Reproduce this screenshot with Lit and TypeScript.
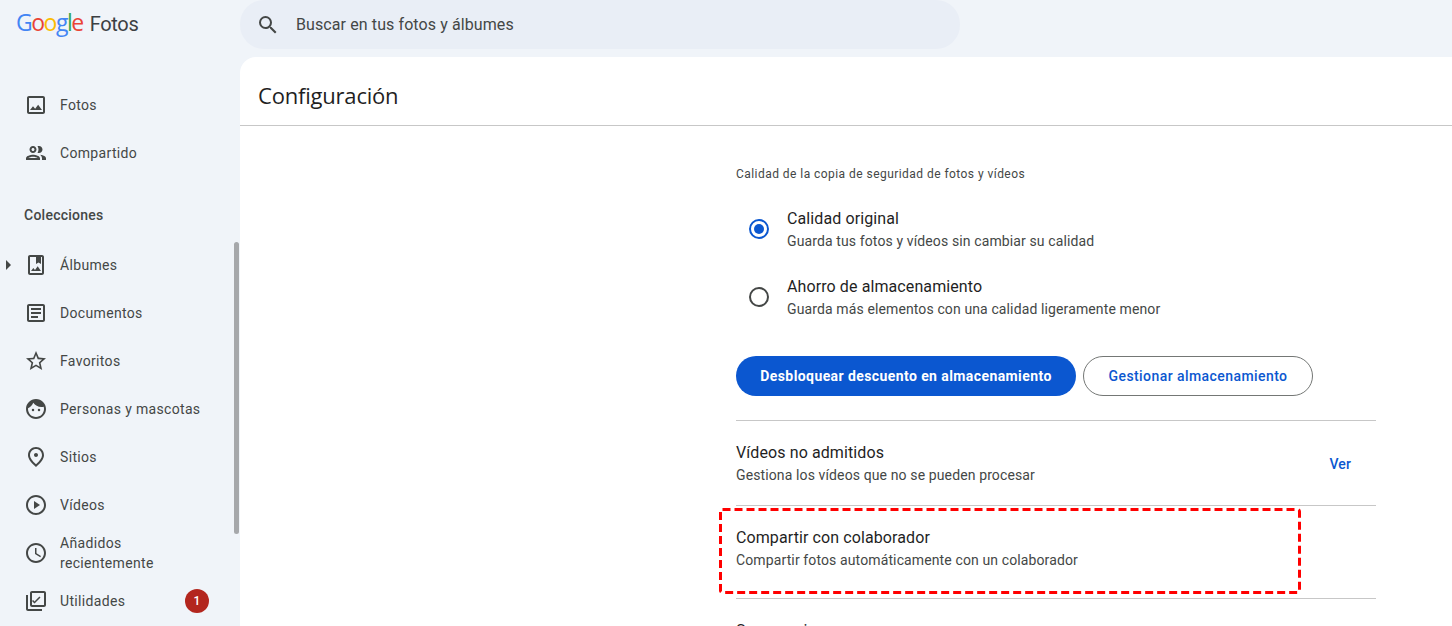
import { LitElement, html, css, svg } from "lit";
import { customElement } from "lit/decorators.js";

const icons: Record<string, any> = {
  fotos: svg`<path d="M19 5v14H5V5h14m0-2H5c-1.1 0-2 .9-2 2v14c0 1.1.9 2 2 2h14c1.1 0 2-.9 2-2V5c0-1.1-.9-2-2-2zm-4.86 8.86l-3 3.87L9 13.14 6 17h12l-3.86-5.14z"/>`,
  compartido: svg`<path d="M9 13.75c-2.34 0-7 1.17-7 3.5V19h14v-1.75c0-2.33-4.66-3.5-7-3.5zM4.34 17c.84-.58 2.87-1.25 4.66-1.25s3.82.67 4.66 1.25H4.34zM9 12c1.93 0 3.5-1.57 3.5-3.5S10.93 5 9 5 5.5 6.57 5.5 8.5 7.07 12 9 12zm0-5c.83 0 1.5.67 1.5 1.5S9.830 10 9 10s-1.5-.67-1.5-1.5S8.170 7 9 7zm7.04 6.810c1.16.84 1.96 1.960 1.96 3.440V19h4v-1.750c0-2.020-3.500-3.170-5.960-3.440zM15 12c1.930 0 3.500-1.570 3.500-3.500S16.930 5 15 5c-.54 0-1.040.130-1.500.350.630.890 1 1.980 1 3.150s-.370 2.260-1 3.150c.460.220.960.350 1.500.350z"/>`,
  albumes: svg`<path d="M18 2H6c-1.100 0-2 .9-2 2v16c0 1.100.9 2 2 2h12c1.100 0 2-.9 2-2V4c0-1.100-.9-2-2-2zm0 18H6V4h6v7l2.500-1.500L17 11V4h1v16zm-4.330-6.670L11 17l-1.670-2L7 18h10l-3.330-4.670z"/>`,
  documentos: svg`<path d="M19 5v14H5V5h14m0-2H5c-1.100 0-2 .9-2 2v14c0 1.100.9 2 2 2h14c1.100 0 2-.9 2-2V5c0-1.100-.9-2-2-2zM14 17H7v-2h7v2zm3-4H7v-2h10v2zm0-4H7V7h10v2z"/>`,
  favoritos: svg`<path d="M22 9.240l-7.190-.620L12 2 9.190 8.630 2 9.240l5.460 4.730L5.820 21 12 17.270 18.180 21l-1.630-7.030L22 9.240zM12 15.400l-3.760 2.270 1-4.280-3.320-2.880 4.380-.380L12 6.100l1.710 4.040 4.380.380-3.320 2.880 1 4.280L12 15.400z"/>`,
  personas: svg`<circle cx="9" cy="13" r="1.250"/><circle cx="15" cy="13" r="1.250"/><path d="M12 2C6.480 2 2 6.480 2 12s4.480 10 10 10 10-4.480 10-10S17.520 2 12 2zm0 18c-4.410 0-8-3.590-8-8 0-.290.020-.580.050-.860 2.360-1.050 4.230-2.980 5.210-5.370C11.070 8.330 14.050 10 17.420 10c.780 0 1.530-.090 2.250-.260.210.710.330 1.470.330 2.260 0 4.410-3.590 8-8 8z"/>`,
  sitios: svg`<path d="M12 12c-1.100 0-2-.9-2-2s.9-2 2-2 2 .9 2 2-.9 2-2 2zm6-1.800C18 6.570 15.350 4 12 4s-6 2.570-6 6.200c0 2.340 1.950 5.440 6 9.140 4.050-3.700 6-6.800 6-9.140zM12 2c4.200 0 8 3.220 8 8.200 0 3.320-2.670 7.250-8 11.800-5.330-4.550-8-8.480-8-11.800C4 5.220 7.800 2 12 2z"/>`,
  videos: svg`<path d="M10 8v8l6-4-6-4zm2-6C6.480 2 2 6.480 2 12s4.480 10 10 10 10-4.480 10-10S17.520 2 12 2zm0 18c-4.410 0-8-3.590-8-8s3.590-8 8-8 8 3.590 8 8-3.590 8-8 8z"/>`,
  recientes: svg`<path d="M11.990 2C6.470 2 2 6.480 2 12s4.470 10 9.990 10C17.520 22 22 17.520 22 12S17.520 2 11.990 2zM12 20c-4.420 0-8-3.580-8-8s3.580-8 8-8 8 3.580 8 8-3.580 8-8 8zm.500-13H11v6l5.250 3.150.750-1.230-4.500-2.670z"/>`,
  utilidades: svg`<path d="M4 6H2v14c0 1.100.9 2 2 2h14v-2H4V6zm16-4H8c-1.100 0-2 .9-2 2v12c0 1.100.9 2 2 2h12c1.100 0 2-.9 2-2V4c0-1.100-.9-2-2-2zm0 14H8V4h12v12zm-9.500-3.600l-1.400-1.400-1.100 1.100 2.500 2.500 6-6-1.100-1.100-4.900 4.900z"/>`,
};

interface NavItem { icon: string; label: string; badge?: string; caret?: boolean; }

const top: NavItem[] = [
  { icon: "fotos", label: "Fotos" },
  { icon: "compartido", label: "Compartido" },
];
const collections: NavItem[] = [
  { icon: "albumes", label: "Álbumes", caret: true },
  { icon: "documentos", label: "Documentos" },
  { icon: "favoritos", label: "Favoritos" },
  { icon: "personas", label: "Personas y mascotas" },
  { icon: "sitios", label: "Sitios" },
  { icon: "videos", label: "Vídeos" },
  { icon: "recientes", label: "Añadidos recientemente" },
  { icon: "utilidades", label: "Utilidades", badge: "1" },
];

@customElement("app-root")
export class AppRoot extends LitElement {
  static styles = css`
    :host {
      display: block;
      width: 1452px;
      height: 626px;
      overflow: hidden;
      background: #f0f4f9;
      font-family: Roboto, "Liberation Sans", sans-serif;
      color: #444746;
    }
    .header {
      height: 57px;
      display: flex;
      align-items: flex-start;
    }
    .brand {
      width: 240px;
      flex: none;
      box-sizing: border-box;
      padding: 8px 0 0 16px;
      display: flex;
      align-items: baseline;
      font-family: "Open Sans", Roboto, sans-serif;
      font-size: 23px;
      font-weight: 500;
      line-height: 28px;
      letter-spacing: -1.5px;
    }
    .brand .g { color: #4285f4; }
    .brand .o1 { color: #ea4335; }
    .brand .o2 { color: #fbbc04; }
    .brand .l { color: #34a853; }
    .brand .e { color: #ea4335; }
    .brand .name {
      margin-left: 7px;
      color: #3c4043;
      font-family: Roboto, sans-serif;
      font-size: 20px;
      font-weight: 400;
      letter-spacing: -0.3px;
    }
    .search {
      width: 720px;
      height: 49px;
      border-radius: 24px;
      background: #e9eef6;
      display: flex;
      align-items: center;
      padding-left: 16px;
      box-sizing: border-box;
      gap: 16px;
      font-size: 16px;
      letter-spacing: 0.1px;
      color: #444746;
    }
    .search svg { width: 24px; height: 24px; fill: #444746; flex: none; }
    .body { display: flex; height: 569px; }
    .side {
      width: 240px;
      flex: none;
      box-sizing: border-box;
      padding-top: 24px;
      position: relative;
    }
    .scroll {
      position: absolute;
      left: 234px;
      top: 185px;
      width: 5px;
      height: 292px;
      border-radius: 3px;
      background: #a6a8ab;
    }
    .nav {
      height: 48px;
      display: flex;
      align-items: center;
      position: relative;
      padding-left: 24px;
      font-size: 14px;
      line-height: 20px;
      font-weight: 400;
    }
    .nav svg { width: 24px; height: 24px; fill: #444746; flex: none; }
    .nav .label { margin-left: 12px; width: 145px; letter-spacing: 0.33px; }
    .caret {
      position: absolute;
      left: 6px;
      top: 19px;
      width: 0;
      height: 0;
      border-left: 5px solid #444746;
      border-top: 5px solid transparent;
      border-bottom: 5px solid transparent;
    }
    .badge {
      position: absolute;
      left: 185px;
      top: 12px;
      width: 24px;
      height: 24px;
      border-radius: 50%;
      background: #b3261e;
      color: #fff;
      font-size: 12px;
      font-weight: 500;
      display: flex;
      align-items: center;
      justify-content: center;
    }
    .section {
      height: 48px;
      margin-top: 14px;
      margin-bottom: 2px;
      box-sizing: border-box;
      padding: 0 0 0 24px;
      display: flex;
      align-items: center;
      font-size: 14px;
      font-weight: 500;
      letter-spacing: 0.25px;
    }
    .main {
      flex: 1;
      background: #fff;
      border-top-left-radius: 16px;
      overflow: hidden;
    }
    .title {
      height: 69px;
      box-sizing: border-box;
      border-bottom: 1px solid #c7c7c7;
      padding: 8px 0 0 18px;
      display: flex;
      align-items: center;
      font-size: 22px;
      color: #1f1f1f;
      line-height: 28px;
      font-family: "Open Sans", Roboto, sans-serif;
      letter-spacing: -0.2px;
    }
    .content {
      width: 640px;
      margin-left: 496px;
      padding-top: 40px;
    }
    .caption {
      font-size: 12px;
      line-height: 16px;
      font-weight: 400;
      color: #444746;
      letter-spacing: 0.45px;
    }
    .radio-row {
      height: 68px;
      display: flex;
      align-items: center;
      padding-left: 13px;
    }
    .radio {
      width: 20px;
      height: 20px;
      flex: none;
      border: 2px solid #444746;
      border-radius: 50%;
      box-sizing: border-box;
      display: flex;
      align-items: center;
      justify-content: center;
    }
    .radio.on { border-color: #0b57d0; }
    .radio.on::after {
      content: "";
      width: 10px;
      height: 10px;
      border-radius: 50%;
      background: #0b57d0;
    }
    .radio-text { margin-left: 18px; }
    .t1 {
      font-size: 16px;
      line-height: 24px;
      color: #1f1f1f;
      letter-spacing: 0.1px;
    }
    .t2 {
      font-size: 14px;
      line-height: 20px;
      color: #444746;
      letter-spacing: 0.12px;
    }
    .options { margin-top: 13px; }
    .buttons { display: flex; gap: 7px; margin-top: 25px; }
    .btn {
      height: 40px;
      border-radius: 20px;
      box-sizing: border-box;
      display: flex;
      align-items: center;
      justify-content: center;
      font-size: 14px;
      font-weight: 500;
    }
    .btn.fill { width: 340px; background: #0b57d0; color: #fff; font-weight: 700; letter-spacing: 0.41px; }
    .btn.line { width: 230px; border: 1px solid #747775; color: #0b57d0; letter-spacing: 0.43px; }
    .row {
      border-top: 1px solid #c7c7c7;
      box-sizing: border-box;
      height: 85px;
      display: flex;
      align-items: center;
      justify-content: space-between;
    }
    .rows { margin-top: 24px; }
    .row.r2 { height: 93px; align-items: flex-start; padding-top: 20px; position: relative; }
    .row.r3 { height: 60px; padding-top: 20px; align-items: flex-start; }
    .ver {
      font-size: 14px;
      font-weight: 500;
      color: #0b57d0;
      margin-right: 25px;
      padding-top: 1px;
      letter-spacing: 0.1px;
    }
    .mark {
      position: absolute;
      left: -17px;
      top: 2px;
      width: 582px;
      height: 86px;
      display: block;
      fill: none;
      stroke: #ff0000;
      stroke-width: 3;
      stroke-dasharray: 8 4;
    }
  `;

  private nav(i: NavItem) {
    return html`<div class="nav">
      ${i.caret ? html`<span class="caret"></span>` : ""}
      <svg viewBox="0 0 24 24">${icons[i.icon]}</svg>
      <span class="label">${i.label}</span>
      ${i.badge ? html`<span class="badge">${i.badge}</span>` : ""}
    </div>`;
  }

  render() {
    return html`
      <div class="header">
        <div class="brand">
          <span class="g">G</span><span class="o1">o</span><span class="o2">o</span><span class="g">g</span><span class="l">l</span><span class="e">e</span>
          <span class="name">Fotos</span>
        </div>
        <div class="search">
          <svg viewBox="0 0 24 24"><path d="M15.500 14h-.790l-.280-.270A6.471 6.471 0 0 0 16 9.500 6.500 6.500 0 1 0 9.500 16c1.610 0 3.090-.590 4.230-1.570l.270.280v.790l5 4.990L20.490 19l-4.990-5zm-6 0C7.010 14 5 11.990 5 9.500S7.010 5 9.500 5 14 7.010 14 9.500 11.990 14 9.500 14z"/></svg>
          <span>Buscar en tus fotos y álbumes</span>
        </div>
      </div>
      <div class="body">
        <div class="side">
          ${top.map((i) => this.nav(i))}
          <div class="section">Colecciones</div>
          ${collections.map((i) => this.nav(i))}
          <div class="scroll"></div>
        </div>
        <div class="main">
          <div class="title">Configuración</div>
          <div class="content">
            <div class="caption">Calidad de la copia de seguridad de fotos y vídeos</div>
            <div class="options">
              <div class="radio-row">
                <span class="radio on"></span>
                <div class="radio-text">
                  <div class="t1">Calidad original</div>
                  <div class="t2">Guarda tus fotos y vídeos sin cambiar su calidad</div>
                </div>
              </div>
              <div class="radio-row">
                <span class="radio"></span>
                <div class="radio-text">
                  <div class="t1">Ahorro de almacenamiento</div>
                  <div class="t2">Guarda más elementos con una calidad ligeramente menor</div>
                </div>
              </div>
            </div>
            <div class="buttons">
              <div class="btn fill">Desbloquear descuento en almacenamiento</div>
              <div class="btn line">Gestionar almacenamiento</div>
            </div>
            <div class="rows">
              <div class="row">
                <div>
                  <div class="t1">Vídeos no admitidos</div>
                  <div class="t2">Gestiona los vídeos que no se pueden procesar</div>
                </div>
                <span class="ver">Ver</span>
              </div>
              <div class="row r2">
                <div>
                  <div class="t1">Compartir con colaborador</div>
                  <div class="t2">Compartir fotos automáticamente con un colaborador</div>
                </div>
                <svg class="mark" viewBox="0 0 582 86"><rect x="1.5" y="1.5" width="579" height="83" rx="2"></rect></svg>
              </div>
              <div class="row r3">
                <div class="t1">Sugerencias</div>
              </div>
            </div>
          </div>
        </div>
      </div>
    `;
  }
}
